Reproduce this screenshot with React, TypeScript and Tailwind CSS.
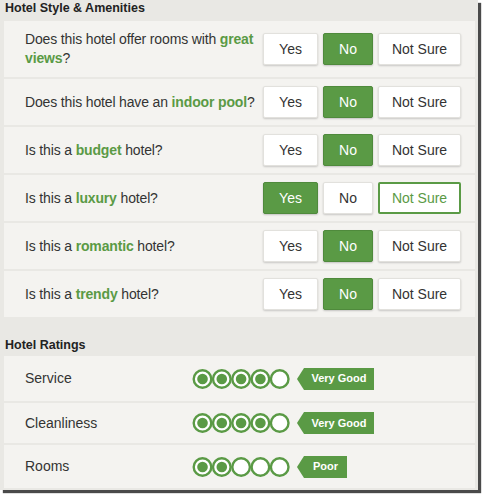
import React from "react";

const green = "#5a9a45";

type Answer = "yes" | "no" | "unsure";

interface Question {
  before: string;
  strong: string;
  after: string;
  answer: Answer;
  hover?: Answer;
  tall?: boolean;
}

const questions: Question[] = [
  { before: "Does this hotel offer rooms with ", strong: "great", after: "", answer: "no", tall: true },
  { before: "Does this hotel have an ", strong: "indoor pool", after: "?", answer: "no" },
  { before: "Is this a ", strong: "budget", after: " hotel?", answer: "no" },
  { before: "Is this a ", strong: "luxury", after: " hotel?", answer: "yes", hover: "unsure" },
  { before: "Is this a ", strong: "romantic", after: " hotel?", answer: "no" },
  { before: "Is this a ", strong: "trendy", after: " hotel?", answer: "no" },
];

const ratings = [
  { label: "Service", score: 4, word: "Very Good", badge: "w-[70px]", h: "h-[45px]" },
  { label: "Cleanliness", score: 4, word: "Very Good", badge: "w-[70px]", h: "h-[40px]" },
  { label: "Rooms", score: 2, word: "Poor", badge: "w-[43px]", h: "h-[43px]" },
];

const Choice = ({ label, active, outlined, width }: { label: string; active: boolean; outlined: boolean; width: string }) => {
  let cls = "bg-white text-[#333] border border-[#e2e1dd] shadow-[0_1px_2px_rgba(0,0,0,0.18)]";
  if (active) cls = "bg-[#5a9a45] text-white border border-[#4f8a3c] shadow-[0_1px_2px_rgba(0,0,0,0.2)]";
  if (outlined) cls = "bg-white text-[#5a9a45] border-2 border-[#5a9a45]";
  return (
    <div className={`h-[32px] ${width} rounded-[2px] flex items-center justify-center text-[14px] ${cls}`}>
      {label}
    </div>
  );
};

const Bubbles = ({ score }: { score: number }) => (
  <svg width="99" height="22" viewBox="0 0 99 22">
    {[0, 1, 2, 3, 4].map((i) => (
      <g key={i}>
        <circle cx={10.5 + i * 19.3} cy={11} r={8.8} fill="white" stroke={green} strokeWidth={2.4} />
        {i < score && <circle cx={10.5 + i * 19.3} cy={11} r={5.3} fill={green} />}
      </g>
    ))}
  </svg>
);

export default function App() {
  return (
    <div className="w-[482px] h-[494px] bg-white" style={{ fontFamily: '"Liberation Sans", Arial, sans-serif' }}>
      <div className="w-[478px] h-[490px] bg-[#e9e8e4] shadow-[3px_3px_1px_#4a4a4a] flex flex-col">
        <div className="h-[21px] px-[5px] pt-[1px] text-[12.5px] font-bold text-[#222] leading-[15px]">
          Hotel Style &amp; Amenities
        </div>
        <div className="ml-[4px] w-[471px] flex flex-col gap-[2px]">
          {questions.map((q, i) => (
            <div
              key={i}
              className={`bg-[#f4f3f0] flex items-center justify-between pl-[21px] pr-[14px] ${q.tall ? "h-[56px]" : "h-[46px]"}`}
            >
              <div className="w-[236px] text-[14px] leading-[19px] text-[#333] tracking-[-0.15px]">
                {q.before}
                <span className="font-bold text-[#5a9a45]">{q.strong}</span>
                {q.after}
                {q.tall && (
                  <>
                    <br />
                    <span className="font-bold text-[#5a9a45]">views</span>?
                  </>
                )}
              </div>
              <div className="flex gap-[5px]">
                <Choice label="Yes" width="w-[55px]" active={q.answer === "yes"} outlined={q.hover === "yes"} />
                <Choice label="No" width="w-[50px]" active={q.answer === "no"} outlined={q.hover === "no"} />
                <Choice label="Not Sure" width="w-[83px]" active={q.answer === "unsure"} outlined={q.hover === "unsure"} />
              </div>
            </div>
          ))}
        </div>
        <div className="h-[39px] px-[5px] pt-[21px] text-[12.5px] font-bold text-[#222] leading-[15px]">
          Hotel Ratings
        </div>
        <div className="ml-[4px] w-[471px] flex flex-col gap-[2px]">
          {ratings.map((r) => (
            <div key={r.label} className={`${r.h} bg-[#f4f3f0] flex items-center pl-[21px]`}>
              <div className="w-[167px] text-[14px] text-[#333]">{r.label}</div>
              <Bubbles score={r.score} />
              <div className="ml-[6px] flex items-center">
                <div className="w-0 h-0 border-y-[11px] border-y-transparent border-r-[7px] border-r-[#5a9a45]" />
                <div className={`h-[22px] ${r.badge} bg-[#5a9a45] text-white text-[11px] font-bold flex items-center justify-center`}>
                  {r.word}
                </div>
              </div>
            </div>
          ))}
        </div>
      </div>
    </div>
  );
}
